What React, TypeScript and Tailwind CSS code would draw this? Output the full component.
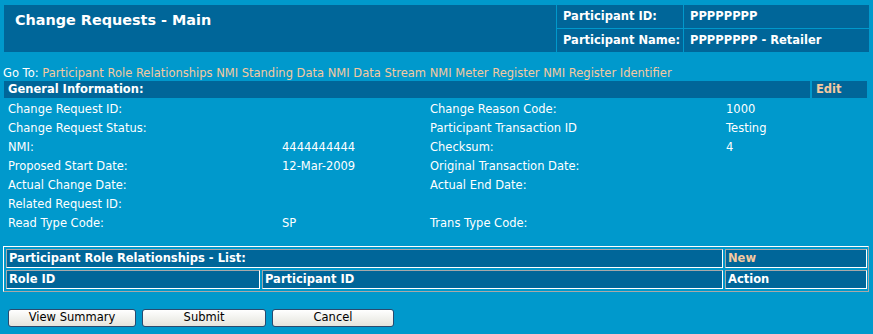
import React from "react";

const links = [
  "Participant Role Relationships",
  "NMI Standing Data",
  "NMI Data Stream",
  "NMI Meter Register",
  "NMI Register Identifier",
];

const rows: [string, string, string, string][] = [
  ["Change Request ID:", "", "Change Reason Code:", "1000"],
  ["Change Request Status:", "", "Participant Transaction ID", "Testing"],
  ["NMI:", "4444444444", "Checksum:", "4"],
  ["Proposed Start Date:", "12-Mar-2009", "Original Transaction Date:", ""],
  ["Actual Change Date:", "", "Actual End Date:", ""],
  ["Related Request ID:", "", "", ""],
  ["Read Type Code:", "SP", "Trans Type Code:", ""],
];

function Button({ label, className }: { label: string; className: string }) {
  return (
    <button
      className={`${className} h-[18px] rounded-[3px] border border-[#2a4a6e] bg-gradient-to-b from-white to-[#e4e4dc] text-black text-[11.5px] leading-none`}
    >
      {label}
    </button>
  );
}

const cell =
  "h-[19px] flex items-center px-[2px] bg-[#006699] border border-t-[#a8a8a8] border-l-[#a8a8a8] border-r-white border-b-white font-bold";

export default function App() {
  return (
    <div
      className="w-[873px] h-[334px] bg-[#0099cc] text-white text-[11.5px] overflow-hidden"
      style={{ fontFamily: '"DejaVu Sans", Verdana, sans-serif' }}
    >
      {/* header */}
      <div className="mt-[5px] mx-[4px] flex gap-px h-[47px]">
        <div className="w-[552px] bg-[#006699] pl-[11px] pt-[6px]">
          <h1 className="text-[14.4px] font-bold leading-[18px]">Change Requests - Main</h1>
        </div>
        <div className="flex-1 grid grid-cols-[126px_1fr] grid-rows-2 gap-px font-bold">
          <div className="bg-[#006699] flex items-center pl-[6px]">Participant ID:</div>
          <div className="bg-[#006699] flex items-center pl-[6px]">PPPPPPPP</div>
          <div className="bg-[#006699] flex items-center pl-[6px]">Participant Name:</div>
          <div className="bg-[#006699] flex items-center pl-[6px]">PPPPPPPP - Retailer</div>
        </div>
      </div>

      {/* go to */}
      <div className="mt-[14px] pl-[3px] h-[14px] leading-[14px] whitespace-nowrap">
        Go To:{" "}
        {links.map((l, i) => (
          <React.Fragment key={l}>
            <a className="text-[#f5c9a0] cursor-pointer">{l}</a>
            {i < links.length - 1 ? " " : ""}
          </React.Fragment>
        ))}
      </div>

      {/* general info */}
      <div className="mt-[1px] mx-[4px] flex gap-[2px] h-[17px] font-bold">
        <div className="w-[806px] bg-[#006699] flex items-center pl-[4px]">General Information:</div>
        <div className="w-[55px] bg-[#006699] flex items-center pl-[4px] text-[#f5c9a0]">Edit</div>
      </div>

      <div className="mt-[2px] pl-[8px]">
        {rows.map((r, i) => (
          <div key={i} className="grid grid-cols-[274px_148px_296px_1fr] h-[19px] items-center">
            {r.map((c, j) => (
              <span key={j}>{c}</span>
            ))}
          </div>
        ))}
      </div>

      {/* list table */}
      <div className="mt-[13px] mx-[3px] w-[866px] border border-t-white border-l-white border-r-[#a8a8a8] border-b-[#a8a8a8] p-px">
        <div className="grid grid-cols-[254px_461px_142px] gap-[2px] p-px">
          <div className={`${cell} col-span-2`}>Participant Role Relationships - List:</div>
          <div className={`${cell} text-[#f5c9a0]`}>New</div>
          <div className={cell}>Role ID</div>
          <div className={cell}>Participant ID</div>
          <div className={cell}>Action</div>
        </div>
      </div>

      {/* buttons */}
      <div className="mt-[17px] pl-[8px] flex gap-[6px]">
        <Button label="View Summary" className="w-[128px]" />
        <Button label="Submit" className="w-[124px]" />
        <Button label="Cancel" className="w-[122px]" />
      </div>
    </div>
  );
}
